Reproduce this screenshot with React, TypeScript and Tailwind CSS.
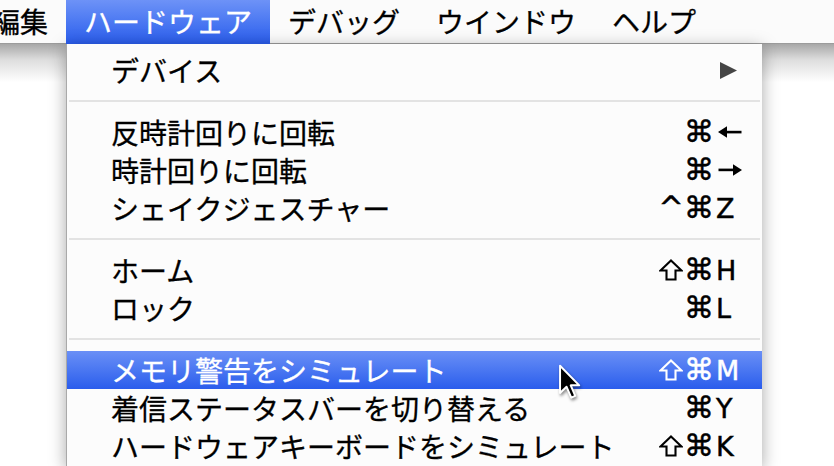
import React from "react";

type RowProps = {
  label: string;
  mods?: string[];
  k?: string;
  active?: boolean;
  arrow?: boolean;
};

function Shift() {
  return (
    <svg width="24" height="22" viewBox="0 0 24 22" className="mx-auto">
      <polygon
        points="12,1.5 22.5,11.5 16.5,11.5 16.5,20.5 7.5,20.5 7.5,11.5 1.5,11.5"
        fill="none"
        stroke="currentColor"
        strokeWidth="2.1"
        strokeLinejoin="miter"
      />
    </svg>
  );
}

function Arrow({ dir }: { dir: "left" | "right" }) {
  return (
    <svg
      width="24"
      height="14"
      viewBox="0 0 24 14"
      className={dir === "right" ? "rotate-180" : ""}
    >
      <rect x="6" y="5.8" width="17.5" height="2.6" fill="currentColor" />
      <polygon points="0,7 9,1.2 9,12.8" fill="currentColor" />
    </svg>
  );
}

function Row({ label, mods = [], k, active, arrow }: RowProps) {
  return (
    <div
      className={`flex h-[38px] items-center pl-[44px] ${
        active
          ? "bg-linear-to-b from-[#6a8ff6] to-[#2a5cec] text-white"
          : "text-black"
      }`}
    >
      <span className="flex-1 whitespace-nowrap text-[28px] leading-none font-['Noto_Sans_CJK_JP',sans-serif] [-webkit-text-stroke:0.3px_currentColor]">
        {label}
      </span>
      <span className="flex items-center justify-end text-[30px] leading-none font-['DejaVu_Sans',sans-serif] [-webkit-text-stroke:0.45px_currentColor]">
        {mods.map((m, i) => (
          <span key={i} className="flex w-[28px] justify-center">
            {m === "⇧" ? <Shift /> : m}
          </span>
        ))}
      </span>
      <span className="flex w-[49px] items-center pl-[3px] text-[27px] leading-none font-['DejaVu_Sans',sans-serif] [-webkit-text-stroke:0.45px_currentColor]">
        {arrow ? (
          <svg width="18" height="17" viewBox="0 0 18 17" className="ml-[4px]">
            <polygon points="0,0 17,8.5 0,17" fill="#454545" />
          </svg>
        ) : k === "←" ? (
          <span className="ml-[2px] flex">
            <Arrow dir="left" />
          </span>
        ) : k === "→" ? (
          <span className="ml-[2px] flex">
            <Arrow dir="right" />
          </span>
        ) : (
          k
        )}
      </span>
    </div>
  );
}

function Sep() {
  return (
    <div className="flex h-[24px] items-center px-[2px]">
      <div className="h-[2px] w-full bg-[#e3e3e3]" />
    </div>
  );
}

function BarItem({ label, active }: { label: string; active?: boolean }) {
  return (
    <div
      className={`flex h-[44px] items-center px-[18px] pb-[2px] text-[28px] leading-none whitespace-nowrap font-['Noto_Sans_CJK_JP',sans-serif] [-webkit-text-stroke:0.3px_currentColor] ${
        active
          ? "bg-linear-to-b from-[#6d92f7] to-[#2a5cec] text-white"
          : "border-b border-[#9c9c9c] text-black"
      }`}
    >
      {label}
    </div>
  );
}

export default function App() {
  return (
    <div className="relative flex h-[466px] w-[834px] flex-col overflow-hidden bg-white">
      <div className="ml-[-26px] flex h-[44px] bg-[#fbfbfb]">
        <BarItem label="編集" />
        <BarItem label="ハードウェア" active />
        <BarItem label="デバッグ" />
        <BarItem label="ウインドウ" />
        <BarItem label="ヘルプ" />
        <div className="h-[44px] flex-1 border-b border-[#9c9c9c]" />
      </div>
      <div className="flex flex-1 bg-[linear-gradient(to_bottom,#a8a8a8,#dedede_16px,#ffffff_38px)]">
        <div className="w-[66px]" />
        <div className="relative z-10 w-[696px] border-l border-[#a9a9a9] bg-[#fcfcfc] pt-[7px] shadow-[0_4px_16px_rgba(0,0,0,0.35)]">
          <Row label="デバイス" arrow />
          <Sep />
          <Row label="反時計回りに回転" mods={["⌘"]} k="←" />
          <Row label="時計回りに回転" mods={["⌘"]} k="→" />
          <Row label="シェイクジェスチャー" mods={["^", "⌘"]} k="Z" />
          <Sep />
          <Row label="ホーム" mods={["⇧", "⌘"]} k="H" />
          <Row label="ロック" mods={["⌘"]} k="L" />
          <Sep />
          <Row label="メモリ警告をシミュレート" mods={["⇧", "⌘"]} k="M" active />
          <Row label="着信ステータスバーを切り替える" mods={["⌘"]} k="Y" />
          <Row label="ハードウェアキーボードをシミュレート" mods={["⇧", "⌘"]} k="K" />
        </div>
        <div className="flex-1" />
      </div>
      <svg
        className="absolute left-[558px] top-[364px] z-20"
        width="24"
        height="38"
        viewBox="0 0 13 21"
        style={{ filter: "drop-shadow(1px 2px 1.5px rgba(0,0,0,0.45))" }}
      >
        <path
          d="M1 1 L1 16 L4.6 12.6 L7.2 18.6 L9.4 17.6 L6.9 11.8 L11.6 11.8 Z"
          fill="#000"
          stroke="#fff"
          strokeWidth="1.1"
          strokeLinejoin="round"
        />
      </svg>
    </div>
  );
}
